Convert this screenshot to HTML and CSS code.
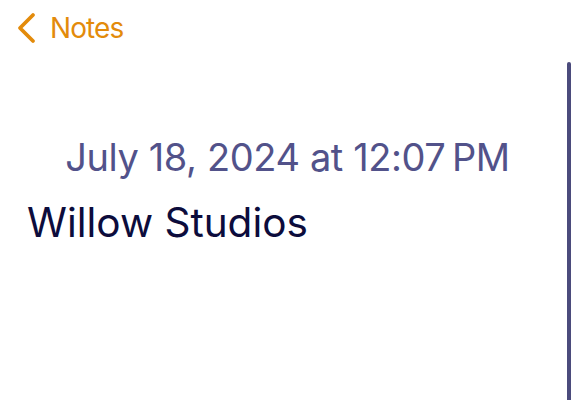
FILE: index.html
```html
<!DOCTYPE html>
<html>
<head>
<meta charset="utf-8">
<link rel="stylesheet" href="styles.css">
</head>
<body>
<div class="screen">
  <header class="nav">
    <button class="back">
      <svg class="chev" width="22" height="32" viewBox="0 0 22 32"><path d="M18 3 L5 16 L18 29" fill="none" stroke="currentColor" stroke-width="3.8" stroke-linecap="round" stroke-linejoin="round"/></svg>
      <span class="back-label">Notes</span>
    </button>
  </header>
  <main class="note">
    <div class="date">July 18, 2024 at 12:07&#8239;PM</div>
    <h1 class="title">Willow Studios</h1>
  </main>
  <div class="scrollbar"></div>
</div>
</body>
</html>
```
FILE: styles.css
```css
html, body {
  margin: 0;
  padding: 0;
  background: #ffffff;
}
.screen {
  position: relative;
  width: 575px;
  height: 400px;
  overflow: hidden;
  font-family: Inter, "Noto Sans", sans-serif;
}
.nav {
  display: flex;
  align-items: center;
  height: 56px;
  padding-left: 15px;
}
.back {
  display: flex;
  align-items: center;
  gap: 13px;
  border: 0;
  background: none;
  padding: 0;
  color: #e38b0b;
  font-family: inherit;
}
.back-label {
  font-size: 28px;
  font-weight: 400;
  letter-spacing: -0.9px;
}
.note {
  padding: 79px 0 0 27px;
}
.date {
  text-align: center;
  margin-left: -27px;
  font-size: 38px;
  color: #52528a;
  letter-spacing: -0.4px;
  line-height: 44px;
}
.title {
  margin: 20px 0 0 0;
  font-size: 40.5px;
  font-weight: 400;
  color: #0c0c3c;
  line-height: 48px;
  letter-spacing: 0;
}
.scrollbar {
  position: absolute;
  left: 567px;
  top: 62px;
  width: 4px;
  height: 350px;
  border-radius: 2px;
  background: #4b4b7c;
}
```
